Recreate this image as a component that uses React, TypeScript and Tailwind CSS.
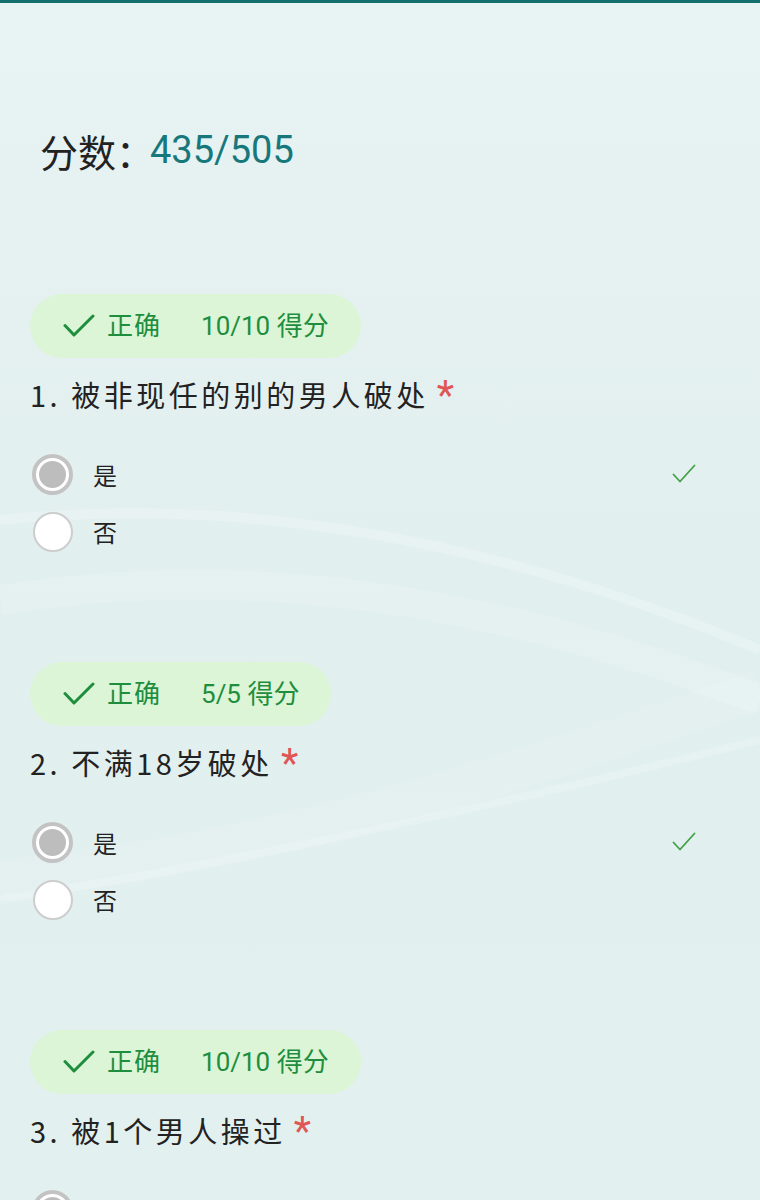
import React from "react";

const FONT = { fontFamily: 'Roboto, "Noto Sans CJK SC", "Noto Sans", sans-serif' };
const QFONT = { fontFamily: '"Noto Sans CJK SC", "Noto Sans", sans-serif' };

function BigCheck() {
  return (
    <svg width="32" height="24" viewBox="0 0 32 24" fill="none">
      <path d="M2 11.5 L11 21 L30 2" stroke="#1e8e3e" strokeWidth="3" strokeLinecap="round" strokeLinejoin="round" />
    </svg>
  );
}

function SmallCheck() {
  return (
    <svg width="24" height="20" viewBox="0 0 24 20" fill="none">
      <path d="M1.5 10.5 L8 17.5 L22.5 1.5" stroke="#43a047" strokeWidth="1.8" strokeLinecap="round" strokeLinejoin="round" />
    </svg>
  );
}

function Radio({ selected }: { selected: boolean }) {
  if (selected) {
    return (
      <div className="w-[41px] h-[41px] rounded-full border-[4px] border-[#c3c3c3] bg-white p-[3px] shrink-0">
        <div className="w-full h-full rounded-full bg-[#bdbdbd]" />
      </div>
    );
  }
  return <div className="w-[40px] h-[40px] rounded-full border-2 border-[#cdcdcd] bg-white shrink-0" />;
}

type Q = { n: number; text: string; score: string };

function Question({ q, first }: { q: Q; first?: boolean }) {
  return (
    <section className={first ? "" : "mt-[110px]"}>
      <div
        className="inline-flex items-center h-[64px] rounded-full bg-[#dcf5d6] pl-[33px] pr-[32px] text-[#1e8e3e] text-[26px]"
        style={FONT}
      >
        <BigCheck />
        <span className="ml-[12px] tracking-[1px]">正确</span>
        <span className="ml-[40px]">{q.score} 得分</span>
      </div>
      <div
        className="mt-[16px] h-[40px] leading-[40px] text-[29px] text-[#222] tracking-[3.5px] flex items-center"
        style={QFONT}
      >
        <span>
          {q.n}. {q.text}
        </span>
        <span className="ml-[8px] text-[#e05555] text-[40px] leading-none relative top-[2px]" style={FONT}>*</span>
      </div>
      <div className="mt-[40px] flex flex-col gap-[16px] pl-[2px]">
        <div className="flex items-center h-[41px]">
          <Radio selected />
          <span className="ml-[20px] text-[24px] text-[#222]" style={QFONT}>是</span>
          <div className="ml-auto mr-[64px] mt-[-2px]">
            <SmallCheck />
          </div>
        </div>
        <div className="flex items-center h-[41px]">
          <div className="w-[41px] flex justify-center">
            <Radio selected={false} />
          </div>
          <span className="ml-[20px] text-[24px] text-[#222]" style={QFONT}>否</span>
        </div>
      </div>
    </section>
  );
}

export default function App() {
  const qs: Q[] = [
    { n: 1, text: "被非现任的别的男人破处", score: "10/10" },
    { n: 2, text: "不满18岁破处", score: "5/5" },
    { n: 3, text: "被1个男人操过", score: "10/10" },
  ];
  return (
    <div className="relative w-[760px] h-[1200px] overflow-hidden bg-[#e4f0f0]">
      <svg className="absolute inset-0 pointer-events-none" width="760" height="1200" viewBox="0 0 760 1200">
        <defs>
          <linearGradient id="bg" x1="0" y1="0" x2="0" y2="1">
            <stop offset="0" stopColor="#e8f3f3" />
            <stop offset="0.5" stopColor="#e2efef" />
            <stop offset="1" stopColor="#e3f0f0" />
          </linearGradient>
        </defs>
        <rect width="760" height="1200" fill="url(#bg)" />
        <path d="M0 520 C 200 500, 450 520, 760 650" stroke="#ffffff" strokeOpacity="0.18" strokeWidth="10" fill="none" />
        <path d="M0 600 C 250 560, 500 600, 760 700" stroke="#ffffff" strokeOpacity="0.12" strokeWidth="30" fill="none" />
        <path d="M0 900 C 250 860, 520 800, 760 740" stroke="#ffffff" strokeOpacity="0.15" strokeWidth="8" fill="none" />
        <path d="M0 880 C 300 850, 550 760, 760 690" stroke="#ffffff" strokeOpacity="0.08" strokeWidth="40" fill="none" />
      </svg>
      <div className="relative">
        <div className="h-[3px] bg-[#13706f]" />
        <div className="pt-[124px] pl-[40px] h-[46px] box-content flex items-center text-[38px]" style={QFONT}>
          <span className="text-[#222]">分数：</span>
          <span className="text-[#17787c] ml-[-4px]" style={FONT}>435/505</span>
        </div>
        <div className="mt-[121px] pl-[30px]">
          {qs.map((q, i) => (
            <Question key={q.n} q={q} first={i === 0} />
          ))}
        </div>
      </div>
    </div>
  );
}
